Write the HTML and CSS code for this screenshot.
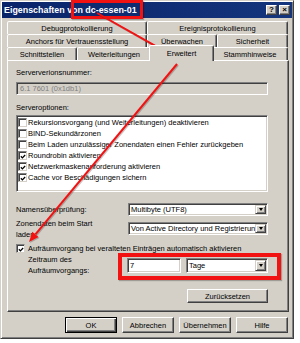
FILE: index.html
```html
<!DOCTYPE html>
<html lang="de">
<head>
<meta charset="utf-8">
<title>Eigenschaften von dc-essen-01</title>
<link rel="stylesheet" href="styles.css">
</head>
<body>
<div class="window">
  <div class="titlebar">
    <span class="title">Eigenschaften von dc-essen-01</span>
    <div class="tb-btns">
      <span class="tb-btn">?</span>
      <span class="tb-btn">×</span>
    </div>
  </div>

  <div class="tabs">
    <div class="tabrow">
      <div class="tab w140">Debugprotokollierung</div>
      <div class="tab w141">Ereignisprotokollierung</div>
    </div>
    <div class="tabrow">
      <div class="tab w140">Anchors für Vertrauensstellung</div>
      <div class="tab w70">Überwachen</div>
      <div class="tab w71">Sicherheit</div>
    </div>
    <div class="tabrow">
      <div class="tab w70">Schnittstellen</div>
      <div class="tab w74">Weiterleitungen</div>
      <div class="tab active">Erweitert</div>
      <div class="tab w76">Stammhinweise</div>
    </div>
  </div>

  <div class="panel">
    <div class="label">Serververionsnummer:</div>
    <div class="field disabled">6.1 7601 (0x1db1)</div>

    <div class="label gap-top">Serveroptionen:</div>
    <div class="listbox">
      <div class="item"><span class="cb"></span>Rekursionsvorgang (und Weiterleitungen) deaktivieren</div>
      <div class="item"><span class="cb"></span>BIND-Sekundärzonen</div>
      <div class="item"><span class="cb"></span>Beim Laden unzulässiger Zonendaten einen Fehler zurückgeben</div>
      <div class="item"><span class="cb"><svg viewBox="0 0 7 7" width="7" height="7"><path d="M1 3.3 L2.8 5.1 L6 1.8" fill="none" stroke="#000" stroke-width="1.5"/></svg></span>Roundrobin aktivieren</div>
      <div class="item"><span class="cb"><svg viewBox="0 0 7 7" width="7" height="7"><path d="M1 3.3 L2.8 5.1 L6 1.8" fill="none" stroke="#000" stroke-width="1.5"/></svg></span>Netzwerkmaskenanforderung aktivieren</div>
      <div class="item"><span class="cb"><svg viewBox="0 0 7 7" width="7" height="7"><path d="M1 3.3 L2.8 5.1 L6 1.8" fill="none" stroke="#000" stroke-width="1.5"/></svg></span>Cache vor Beschädigungen sichern</div>
    </div>

    <div class="row row-name">
      <div class="rlabel">Namensüberprüfung:</div>
      <div class="select"><span class="select-text">Multibyte (UTF8)</span><span class="arrow"></span></div>
    </div>

    <div class="row row-zone">
      <div class="rlabel two">Zonendaten beim Start<br>laden:</div>
      <div class="select sel-zone"><span class="select-text">Von Active Directory und Registrierung</span><span class="arrow"></span></div>
    </div>

    <div class="check-row">
      <span class="cb cb3d"><svg viewBox="0 0 7 7" width="7" height="7"><path d="M1 3.3 L2.8 5.1 L6 1.8" fill="none" stroke="#000" stroke-width="1.5"/></svg></span>Aufräumvorgang bei veralteten Einträgen automatisch aktivieren
    </div>

    <div class="row row-period">
      <div class="rlabel two plabel">Zeitraum des<br>Aufräumvorgangs:</div>
      <div class="field num">7</div>
      <div class="select sel-unit"><span class="select-text">Tage</span><span class="arrow"></span></div>
    </div>

    <div class="btn reset">Zurücksetzen</div>
  </div>

  <div class="btns">
    <div class="btn default">OK</div>
    <div class="btn">Abbrechen</div>
    <div class="btn">Übernehmen</div>
    <div class="btn">Hilfe</div>
  </div>
</div>

<div class="overlay">
  <div class="redbox box-title"></div>
  <div class="redbox box-period"></div>
  <svg class="arrows" width="300" height="343" viewBox="0 0 300 343">
    <g stroke="rgba(0,0,0,0.22)" fill="rgba(0,0,0,0.22)" transform="translate(1 1)">
      <line x1="97" y1="13" x2="159.3" y2="48.1" stroke-width="2"/>
      <polygon points="168,53 157.3,51.6 161.3,44.6" stroke="none"/>
      <line x1="177" y1="64" x2="35.4" y2="234.3" stroke-width="2"/>
      <polygon points="29,242 38.5,236.9 32.3,231.7" stroke="none"/>
    </g>
    <g stroke="#f21212" fill="#f21212">
      <line x1="97" y1="13" x2="159.3" y2="48.1" stroke-width="2"/>
      <polygon points="168,53 157.3,51.6 161.3,44.6" stroke="none"/>
      <line x1="177" y1="64" x2="35.4" y2="234.3" stroke-width="2"/>
      <polygon points="29,242 38.5,236.9 32.3,231.7" stroke="none"/>
    </g>
  </svg>
</div>
</body>
</html>
```

FILE: styles.css
```css
* { box-sizing: border-box; }

html, body {
  margin: 0;
  padding: 0;
  background: #fff;
}

body {
  width: 300px;
  height: 343px;
  overflow: hidden;
  position: relative;
  font-family: "Liberation Sans", Arial, sans-serif;
  font-size: 7.5px;
  color: #000;
}

.window {
  width: 294px;
  height: 339px;
  background: #d4d0c8;
  border: 1px solid;
  border-color: #d4d0c8 #404040 #404040 #d4d0c8;
  box-shadow: inset 1px 1px #fff, inset -1px -1px #808080;
  padding: 1px;
  display: flex;
  flex-direction: column;
}

/* title bar */
.titlebar {
  flex: none;
  height: 16px;
  background: linear-gradient(90deg, #0a246a, #14357c);
  display: flex;
  align-items: center;
  justify-content: space-between;
  padding: 0 2px 0 2px;
}

.title {
  color: #fff;
  font-weight: bold;
  font-size: 8.9px;
  white-space: nowrap;
}

.tb-btns {
  display: flex;
  gap: 2px;
}

.tb-btn {
  width: 11px;
  height: 10px;
  background: #d4d0c8;
  border: 1px solid;
  border-color: #fff #404040 #404040 #fff;
  box-shadow: inset -1px -1px #808080;
  font-size: 8px;
  font-weight: bold;
  line-height: 1;
  display: flex;
  align-items: center;
  justify-content: center;
}

/* tabs */
.tabs {
  flex: none;
  margin: 3px 0 0 5px;
  width: 282px;
  display: flex;
  flex-direction: column;
}

.tabrow {
  display: flex;
  height: 13px;
}

.tab {
  flex: none;
  height: 13px;
  background: #d4d0c8;
  border: 1px solid;
  border-bottom: none;
  border-color: #fff #404040 transparent #fff;
  border-radius: 2px 2px 0 0;
  box-shadow: inset -1px 0 #808080;
  display: flex;
  align-items: center;
  justify-content: center;
  white-space: nowrap;
  padding-top: 1px;
}

.w140 { width: 140px; }
.w141 { width: 141px; }
.w70 { width: 70px; }
.w71 { width: 71px; }
.w74 { width: 74px; }
.w76 { width: 76px; }

.tab.active {
  position: relative;
  z-index: 1;
  width: 65px;
  height: 16px;
  margin: -2px -2px -1px -2px;
  padding-top: 0;
}

/* panel */
.panel {
  flex: none;
  margin-left: 5px;
  width: 282px;
  height: 252px;
  border: 1px solid;
  border-color: #fff #404040 #404040 #fff;
  box-shadow: inset -1px -1px #808080;
  padding: 6px 20px 0 8px;
  display: flex;
  flex-direction: column;
}

.label {
  height: 11px;
  line-height: 11px;
  margin-bottom: 4px;
  white-space: nowrap;
}

.label.gap-top {
  margin-top: 7px;
  margin-bottom: 2px;
}

.field {
  height: 13px;
  background: #fff;
  border: 1px solid;
  border-color: #808080 #fff #fff #808080;
  box-shadow: inset 1px 1px #404040, inset -1px -1px #d4d0c8;
  padding: 0 3px;
  display: flex;
  align-items: center;
  white-space: nowrap;
}

.field.disabled {
  background: #d4d0c8;
  color: #808080;
}

.listbox {
  height: 77px;
  background: #fff;
  border: 1px solid;
  border-color: #808080 #fff #fff #808080;
  box-shadow: inset 1px 1px #404040, inset -1px -1px #d4d0c8;
  padding: 1px;
}

.item {
  height: 11px;
  display: flex;
  align-items: center;
  white-space: nowrap;
}

.cb {
  flex: none;
  width: 9px;
  height: 9px;
  margin-right: 1px;
  background: #fff;
  border: 1px solid;
  border-color: #808080 #d4d0c8 #d4d0c8 #808080;
  box-shadow: inset 1px 1px #404040;
  display: flex;
  align-items: center;
  justify-content: center;
}

.cb svg { display: block; margin: 1px 0 0 1px; }

.row {
  display: flex;
  align-items: center;
}

.row-name { margin-top: 11px; }

.row-zone {
  margin-top: 2px;
  align-items: flex-start;
}

.rlabel {
  flex: none;
  width: 112px;
  white-space: nowrap;
  line-height: 11px;
}

.rlabel.two { line-height: 11px; }

.select {
  flex: 1;
  height: 13px;
  background: #fff;
  border: 1px solid;
  border-color: #808080 #fff #fff #808080;
  box-shadow: inset 1px 1px #404040, inset -1px -1px #d4d0c8;
  padding: 1px;
  display: flex;
  align-items: center;
  min-width: 0;
}

.sel-zone { margin-top: 4px; }

.select-text {
  flex: 1;
  min-width: 0;
  overflow: hidden;
  white-space: nowrap;
  padding-left: 1px;
}

.arrow {
  flex: none;
  width: 11px;
  height: 9px;
  background: #d4d0c8;
  border: 1px solid;
  border-color: #d4d0c8 #404040 #404040 #d4d0c8;
  box-shadow: inset 1px 1px #fff, inset -1px -1px #808080;
  display: flex;
  align-items: center;
  justify-content: center;
}

.arrow::after {
  content: "";
  border-left: 2.5px solid transparent;
  border-right: 2.5px solid transparent;
  border-top: 3px solid #000;
}

.check-row {
  margin-top: 3px;
  height: 11px;
  display: flex;
  align-items: center;
  white-space: nowrap;
}

.cb3d {
  width: 9px;
  height: 9px;
  margin-right: 3px;
}

.row-period {
  align-items: flex-start;
}

.plabel {
  width: 99px;
  margin-left: 12px;
}

.num {
  flex: none;
  width: 54px;
  height: 15px;
  margin-top: 4px;
  padding-left: 2px;
}

.sel-unit {
  height: 15px;
  margin-top: 4px;
  margin-left: 5px;
}

.sel-unit .arrow { height: 11px; }

/* buttons */
.btn {
  flex: none;
  background: #d4d0c8;
  border: 1px solid;
  border-color: #fff #404040 #404040 #fff;
  box-shadow: inset -1px -1px #808080;
  display: flex;
  align-items: center;
  justify-content: center;
  white-space: nowrap;
}

.btn.reset {
  align-self: flex-end;
  width: 81px;
  height: 14px;
  margin-top: 13px;
}

.btns {
  flex: none;
  display: flex;
  justify-content: flex-end;
  gap: 5px;
  margin-top: 5px;
  padding-right: 4px;
}

.btns .btn {
  width: 52px;
  height: 16px;
}

.btn.default {
  border: 1px solid #000;
  box-shadow: inset 1px 1px #fff, inset -1px -1px #404040, inset -2px -2px #808080;
}

/* annotation overlay */
.overlay {
  position: absolute;
  left: 0;
  top: 0;
  width: 300px;
  height: 343px;
  pointer-events: none;
}

.redbox {
  position: absolute;
  border: 3px solid #f21212;
  box-shadow: 1px 1px 1px rgba(0, 0, 0, 0.25);
}

.box-title {
  left: 71px;
  top: 0;
  width: 72px;
  height: 19px;
}

.box-period {
  left: 118px;
  top: 253px;
  width: 163px;
  height: 27px;
  border-width: 4px;
}

.arrows {
  position: absolute;
  left: 0;
  top: 0;
}
```
